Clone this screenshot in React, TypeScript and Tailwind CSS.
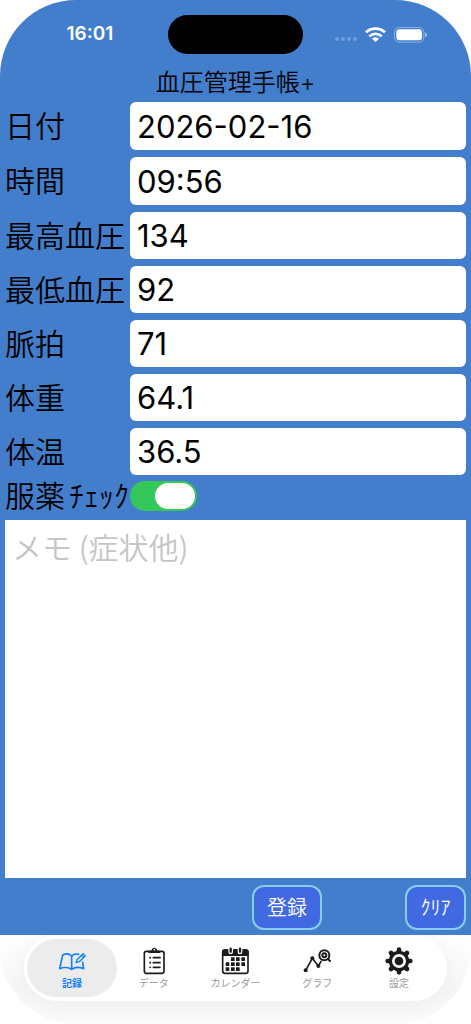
import { useState, type ReactNode } from "react";
import clsx from "clsx";

const fields = [
  { id: "date", label: "日付", value: "2026-02-16", tall: true },
  { id: "time", label: "時間", value: "09:56", tall: true },
  { id: "systolic", label: "最高血圧", value: "134" },
  { id: "diastolic", label: "最低血圧", value: "92" },
  { id: "pulse", label: "脈拍", value: "71" },
  { id: "weight", label: "体重", value: "64.1" },
  { id: "temperature", label: "体温", value: "36.5" },
];

function Icon({ children }: { children: ReactNode }) {
  return (
    <svg viewBox="0 0 84 84" className="h-7 w-7" fill="none" stroke="currentColor" strokeWidth="5" strokeLinecap="round" strokeLinejoin="round" aria-hidden="true">
      {children}
    </svg>
  );
}

function BookIcon() {
  return (
    <Icon>
      <path d="M41 27C34 20 23 19 14 24L5 65C16 60 32 60 41 67C50 60 64 60 77 65L74 46" />
      <path d="M41 27V66M41 27C47 21 55 20 62 22" />
      <path d="M54 47L57 38L75 20L82 26L64 44Z" strokeWidth="4" />
      <path d="M70 25L77 31" strokeWidth="4" />
    </Icon>
  );
}

function ClipboardIcon() {
  return (
    <Icon>
      <rect x="13" y="13" width="59" height="66" rx="6" />
      <path d="M25 18V11H34C36 -1 50 -1 52 11H61V18Z" fill="currentColor" stroke="none" />
      <circle cx="43" cy="8" r="2.5" fill="#fff" stroke="none" />
      <path d="M40 32H60M40 47H60M40 61H60M30 32H31M30 47H31M30 61H31" />
    </Icon>
  );
}

const calendarDays = [[35, 36], [50, 36], [66, 36], [19, 51], [35, 51], [50, 51], [66, 51], [19, 66], [35, 66], [50, 66]];

function CalendarIcon() {
  return (
    <Icon>
      <rect x="5" y="9" width="76" height="70" rx="7" />
      <path d="M3 27V15Q3 7 11 7H75Q83 7 83 15V27Z" fill="currentColor" stroke="none" />
      <path d="M29 6V15M57 6V15" stroke="#fff" strokeWidth="14" />
      <path d="M29 5V14M57 5V14" strokeWidth="7" />
      {calendarDays.map(([x, y]) => (
        <rect key={`${x}-${y}`} x={x - 5} y={y - 5} width="11" height="11" rx="1" fill="currentColor" stroke="none" />
      ))}
    </Icon>
  );
}

function GraphIcon() {
  return (
    <Icon>
      <path d="M8 70L28 34L46 57L54 43" />
      <g fill="currentColor" stroke="none">
        <circle cx="8" cy="70" r="6" />
        <circle cx="28" cy="34" r="6" />
        <circle cx="46" cy="57" r="6" />
      </g>
      <circle cx="64" cy="25" r="15" strokeWidth="6" />
      <circle cx="64" cy="25" r="6" strokeWidth="6" />
      <path d="M75 36L81 42" strokeWidth="6" />
    </Icon>
  );
}

function GearIcon() {
  return (
    <Icon>
      <path d="M42 8V76M8 42H76M18 18L66 66M66 18L18 66" strokeWidth="14" />
      <circle cx="42" cy="42" r="31" fill="currentColor" stroke="none" />
      <circle cx="42" cy="42" r="21" fill="#fff" stroke="none" />
      <circle cx="42" cy="42" r="13" fill="currentColor" stroke="none" />
    </Icon>
  );
}

const tabs = [
  { id: "record", label: "記録", icon: <BookIcon /> },
  { id: "data", label: "データ", icon: <ClipboardIcon /> },
  { id: "calendar", label: "カレンダー", icon: <CalendarIcon /> },
  { id: "graph", label: "グラフ", icon: <GraphIcon /> },
  { id: "settings", label: "設定", icon: <GearIcon /> },
];

function StatusBar() {
  return (
    <div className="grid h-[66px] grid-cols-[1fr_auto_1fr] items-center pt-[3px] text-white">
      <span className="pl-3 text-center text-[19px] font-semibold">16:01</span>
      <div className="h-[39px] w-[135px] rounded-full bg-black" />
      <div className="flex items-center justify-end gap-2 pr-11">
        <div className="flex gap-0.5 pt-2">
          {[0, 1, 2, 3].map((dot) => (
            <span key={dot} className="h-1 w-1 rounded-full bg-white/25" />
          ))}
        </div>
        <svg viewBox="0 0 63 45" className="h-[15px] w-[21px]" fill="none" stroke="currentColor" strokeWidth="8" aria-hidden="true">
          <path d="M3 16C19 1 44 1 60 16" />
          <path d="M13 28C23 18 40 18 50 28" />
          <path d="M31.5 45L21 35C27 29 36 29 42 35Z" fill="currentColor" stroke="none" />
        </svg>
        <svg viewBox="0 0 99 48" className="h-4 w-[33px]" aria-hidden="true">
          <rect x="1.5" y="1.5" width="88" height="44" rx="14" fill="none" stroke="#fff" strokeOpacity="0.4" strokeWidth="3" />
          <rect x="7" y="7" width="77" height="33" rx="9" fill="#fff" />
          <path d="M93 16Q99 18 99 23.500Q99 29 93 31Z" fill="#fff" fillOpacity="0.5" />
        </svg>
      </div>
    </div>
  );
}

export default function App() {
  const [activeTab, setActiveTab] = useState("record");

  return (
    <div className="flex min-h-screen flex-col bg-white font-['Inter','Noto_Sans_CJK_JP',sans-serif] text-black">
      <main className="flex flex-1 flex-col rounded-t-[76px] bg-[#437ecc]">
        <StatusBar />
        <h1 className="pt-px text-center text-2xl leading-8 font-[350]">血圧管理手帳+</h1>

        <form className="flex flex-1 flex-col px-[5px] pt-[3px] pb-[5px]" onSubmit={(e) => e.preventDefault()}>
          <div className="flex flex-col gap-[7px]">
            {fields.map((field) => (
              <div key={field.id} className="flex items-center">
                <label htmlFor={field.id} className="w-[125px] shrink-0 text-3xl font-[350] whitespace-nowrap">
                  {field.label}
                </label>
                <input
                  id={field.id}
                  defaultValue={field.value}
                  className={clsx(
                    "min-w-0 flex-1 rounded-md bg-white px-[7px] text-[31px] outline-none",
                    field.tall ? "h-12" : "h-[47px]"
                  )}
                />
              </div>
            ))}
          </div>

          <div className="flex h-[41px] items-center">
            <label htmlFor="medication" className="w-[125px] shrink-0 text-3xl font-[350] whitespace-nowrap">
              服薬<span className="ml-1">ﾁｪｯｸ</span>
            </label>
            <input
              id="medication"
              type="checkbox"
              role="switch"
              defaultChecked
              className="h-[30px] w-[67px] appearance-none rounded-full bg-gray-300 before:m-0.5 before:block before:h-[26px] before:w-10 before:rounded-full before:bg-white checked:bg-[#34c759] checked:before:ml-[25px]"
            />
          </div>

          <textarea
            aria-label="メモ"
            placeholder="メモ (症状他)"
            className="mt-1 min-h-40 flex-1 resize-none bg-white px-[7px] py-2 font-['Noto_Sans_CJK_JP',sans-serif] text-3xl font-[350] outline-none placeholder:text-[#c5c5c7]"
          />

          <div className="mt-[7px] flex justify-end gap-[83px]">
            <button type="submit" className="h-[45px] w-[70px] rounded-xl border-2 border-[#87ceeb] bg-[#4169e1] text-xl font-[350] text-white">
              登録
            </button>
            <button type="reset" className="h-[45px] w-[61px] rounded-xl border-2 border-[#87ceeb] bg-[#4169e1] text-xl font-[350] text-white">
              ｸﾘｱ
            </button>
          </div>
        </form>
      </main>

      <nav className="overflow-hidden rounded-b-[76px] bg-linear-to-b from-white via-[#f7f7f7] via-60% to-[#fcfcfc] px-6 pb-[23px]">
        <div className="flex h-[66px] rounded-[33px] bg-white px-[7px] pt-1 pb-1 shadow-[0_4px_30px_rgba(0,0,0,0.06)]">
          {tabs.map((tab) => {
            const active = tab.id === activeTab;
            return (
              <button
                key={tab.id}
                type="button"
                aria-current={active ? "page" : undefined}
                onClick={() => setActiveTab(tab.id)}
                className={clsx(
                  "-mx-1 flex flex-1 flex-col items-center rounded-full pt-2 text-[10px] leading-4",
                  active ? "bg-[#ececec] font-bold text-[#1480f5]" : "text-[#1c1c1c]"
                )}
              >
                {tab.icon}
                <span className={active ? "" : "text-[#999]"}>{tab.label}</span>
              </button>
            );
          })}
        </div>
      </nav>
    </div>
  );
}
